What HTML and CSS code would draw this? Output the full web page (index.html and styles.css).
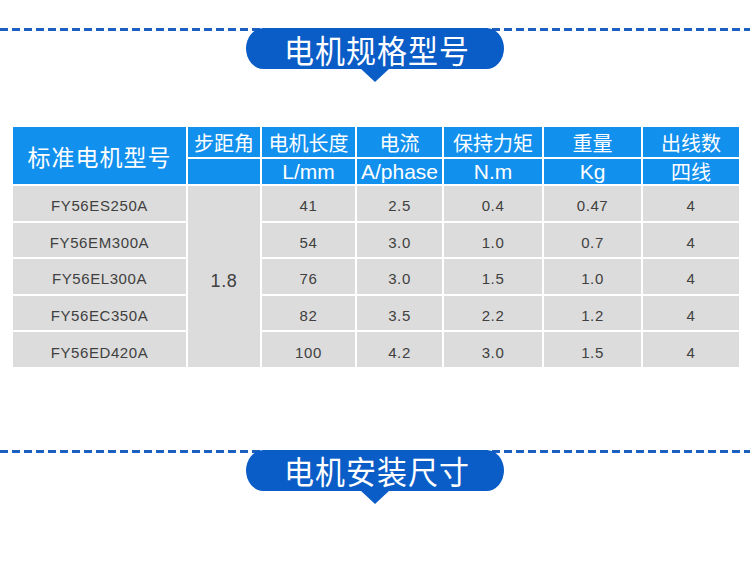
FILE: index.html
```html
<!DOCTYPE html>
<html lang="zh-CN">
<head>
<meta charset="utf-8">
<title>电机规格型号</title>
<link rel="stylesheet" href="styles.css">
</head>
<body>
<section class="sec sec-first">
  <div class="rule"></div>
  <div class="bubble"><span>电机规格型号</span></div>
</section>

<div class="spec">
  <div class="h h-model">标准电机型号</div>
  <div class="h h-cn">步距角</div>
  <div class="h h-cn">电机长度</div>
  <div class="h h-cn">电流</div>
  <div class="h h-cn">保持力矩</div>
  <div class="h h-cn">重量</div>
  <div class="h h-cn">出线数</div>
  <div class="h h-unit"></div>
  <div class="h h-unit">L/mm</div>
  <div class="h h-unit">A/phase</div>
  <div class="h h-unit">N.m</div>
  <div class="h h-unit">Kg</div>
  <div class="h h-unit h-cn2">四线</div>

  <div class="c c-model">FY56ES250A</div>
  <div class="c c-step">1.8</div>
  <div class="c">41</div>
  <div class="c">2.5</div>
  <div class="c">0.4</div>
  <div class="c">0.47</div>
  <div class="c">4</div>

  <div class="c c-model">FY56EM300A</div>
  <div class="c">54</div>
  <div class="c">3.0</div>
  <div class="c">1.0</div>
  <div class="c">0.7</div>
  <div class="c">4</div>

  <div class="c c-model">FY56EL300A</div>
  <div class="c">76</div>
  <div class="c">3.0</div>
  <div class="c">1.5</div>
  <div class="c">1.0</div>
  <div class="c">4</div>

  <div class="c c-model">FY56EC350A</div>
  <div class="c">82</div>
  <div class="c">3.5</div>
  <div class="c">2.2</div>
  <div class="c">1.2</div>
  <div class="c">4</div>

  <div class="c c-model">FY56ED420A</div>
  <div class="c">100</div>
  <div class="c">4.2</div>
  <div class="c">3.0</div>
  <div class="c">1.5</div>
  <div class="c">4</div>
</div>

<section class="sec sec-second">
  <div class="rule"></div>
  <div class="bubble"><span>电机安装尺寸</span></div>
</section>
</body>
</html>
```

FILE: styles.css
```css
html, body {
  margin: 0;
  padding: 0;
  background: #ffffff;
}
body {
  width: 750px;
  height: 573px;
  overflow: hidden;
  font-family: "Liberation Sans", "Noto Sans CJK SC", sans-serif;
}

.sec {
  display: flex;
  flex-direction: column;
  align-items: center;
}
.sec-first {
  padding-top: 28px;
}
.sec-second {
  margin-top: 83px;
}
.rule {
  align-self: stretch;
  height: 3px;
  background: repeating-linear-gradient(90deg, #1b5fc1 0 8px, transparent 8px 12px);
}
.bubble {
  position: relative;
  margin-top: -3px;
  width: 258px;
  height: 41px;
  background: #0a5cc6;
  border-radius: 18px / 21px;
  display: flex;
  align-items: center;
  justify-content: center;
  color: #ffffff;
  font-family: "Noto Sans CJK SC", sans-serif;
  font-size: 30px;
  line-height: 1;
  letter-spacing: 1px;
}
.bubble span {
  transform: scaleY(1.05);
  margin-left: 4px;
}
.bubble::after {
  content: "";
  position: absolute;
  left: 50%;
  bottom: -13px;
  margin-left: -15px;
  border-left: 15px solid transparent;
  border-right: 15px solid transparent;
  border-top: 14px solid #0a5cc6;
}

.spec {
  margin: 58px 0 0 13px;
  display: grid;
  grid-template-columns: 173px 72px 93px 85px 98px 97px 96px;
  grid-template-rows: 30px 25px repeat(5, 34.6px);
  gap: 2px;
  width: 726px;
}
.h {
  background: #1290ee;
  color: #ffffff;
  display: flex;
  align-items: center;
  justify-content: center;
  line-height: 1;
}
.h-model {
  grid-row: 1 / 3;
  font-family: "Noto Sans CJK SC", sans-serif;
  font-size: 23px;
  letter-spacing: 1px;
  padding-top: 2px;
}
.h-cn {
  font-family: "Noto Sans CJK SC", sans-serif;
  font-size: 20px;
  padding-top: 1px;
}
.h-unit {
  font-family: "Liberation Sans", "Noto Sans CJK SC", sans-serif;
  font-size: 21px;
}
.h-cn2 {
  font-family: "Noto Sans CJK SC", sans-serif;
  font-size: 20px;
}
.c {
  background: #dcdcdc;
  color: #404040;
  display: flex;
  align-items: center;
  justify-content: center;
  font-size: 15px;
  letter-spacing: 0.6px;
  line-height: 1;
  padding-top: 5px;
}
.c-step {
  grid-row: 3 / 8;
  grid-column: 2;
  font-size: 18px;
  letter-spacing: 0.6px;
  padding-top: 9px;
}
```
